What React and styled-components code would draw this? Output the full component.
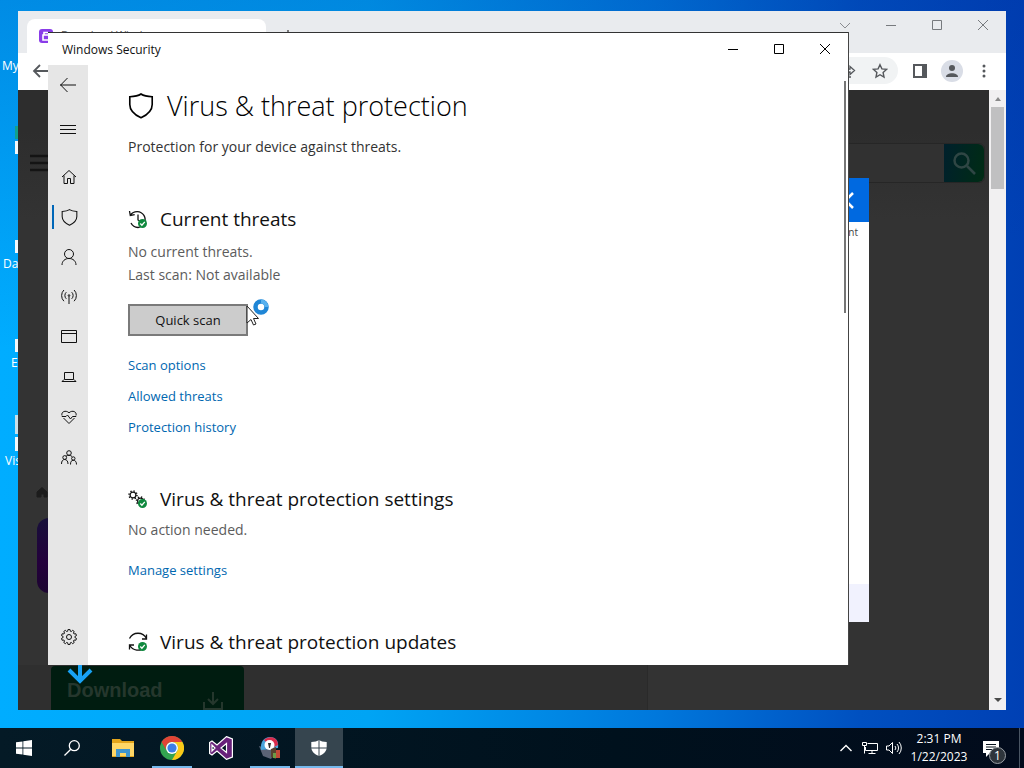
import React from "react";
import styled, { createGlobalStyle } from "styled-components";

const Global = createGlobalStyle`
  * { box-sizing: border-box; }
  html, body, #root { height: 100%; }
  body { margin: 0; overflow: hidden; font-family: "Open Sans", "Noto Sans", sans-serif; font-size: 14px; color: #111; }
  h1, h2, p, ul { margin: 0; padding: 0; font-weight: 400; }
  ul { list-style: none; }
  button { border: 0; padding: 0; background: none; font: inherit; color: inherit; }
  svg { display: block; flex: none; }
`;

/* ---------- desktop ---------- */
const Desktop = styled.div`
  display: flex;
  flex-direction: column;
  height: 100%;
  min-height: 600px;
  background: linear-gradient(174deg, rgba(0, 40, 150, 0.25) 0%, rgba(0, 60, 180, 0) 40%),
    linear-gradient(90deg, #00adff 0%, #00a4f4 36%, #0078dc 64%, #0050c0 84%, #0040b4 100%);
`;
const Workspace = styled.main`
  position: relative;
  flex: 1;
  overflow: hidden;
`;
const Shortcut = styled.div`
  position: absolute;
  top: ${(p) => p.$top}px;
  left: ${(p) => p.$left}px;
  font-size: 12px;
  line-height: 16px;
  color: #fff;
`;
const ShortcutArt = styled.div`
  position: absolute;
  top: ${(p) => p.$top}px;
  left: 15px;
  width: 32px;
  height: ${(p) => p.$height}px;
  background: ${(p) => p.$color || "#f4f8fa"};
`;

/* ---------- browser window ---------- */
const BrowserWindow = styled.section`
  position: absolute;
  inset: 11px 18px 18px;
  display: flex;
  flex-direction: column;
  background: #fff;
`;
const TabStrip = styled.header`
  display: flex;
  align-items: flex-end;
  height: 42px;
  padding-left: 9px;
  background: #e9ebee;
`;
const Tab = styled.div`
  display: flex;
  gap: 8px;
  width: 239px;
  height: 34px;
  padding: 10px 12px;
  border-radius: 8px 8px 0 0;
  background: #fff;
  font-size: 11px;
  line-height: 11px;
  color: #555;
`;
const NewTab = styled.button`
  width: 28px;
  height: 34px;
  margin-left: 8px;
  display: grid;
  place-items: center;
  color: #555;
`;
const Controls = styled.div`
  display: flex;
  align-self: flex-start;
  margin-left: auto;
`;
const ControlButton = styled.button`
  display: grid;
  place-items: center;
  width: 46px;
  height: ${(p) => p.$height}px;
  color: ${(p) => p.$color};
`;
const Toolbar = styled.div`
  display: flex;
  align-items: center;
  height: 37px;
  padding: 0 14px 2px 10px;
  color: #55585c;
`;
const AddressBar = styled.div`
  display: flex;
  flex: 1;
  align-items: center;
  justify-content: flex-end;
  gap: 15px;
  height: 27px;
  margin: 0 14px 0 64px;
  padding-right: 10px;
  border-radius: 14px;
  background: #f1f3f4;
`;
const Avatar = styled.button`
  display: grid;
  place-items: center;
  width: 22px;
  height: 22px;
  margin: 0 13px;
  border-radius: 50%;
  background: #d9dde6;
`;
const BrowserBody = styled.div`
  display: flex;
  flex: 1;
  min-height: 0;
`;
const WebPage = styled.div`
  position: relative;
  display: flex;
  flex: 1;
  flex-direction: column;
  overflow: hidden;
  background: linear-gradient(#2d2d2d 0, #2d2d2d 40px, #333 130px);
`;
const SiteHeader = styled.div`
  display: flex;
  align-items: center;
  justify-content: space-between;
  margin-top: 53px;
  padding: 0 4px 0 12px;
`;
const SiteSearch = styled.div`
  display: flex;
  justify-content: flex-end;
  width: 400px;
  height: 40px;
  border: 1px solid #262626;
  border-radius: 6px;
  background: #313131;
`;
const SiteSearchButton = styled.button`
  display: grid;
  place-items: center;
  width: 40px;
  border-radius: 0 6px 6px 0;
  background: linear-gradient(100deg, #00202c, #002c14);
  color: #2f4644;
`;
const AppBadge = styled.div`
  position: absolute;
  left: 19px;
  bottom: 117px;
  width: 75px;
  height: 75px;
  border-radius: 12px;
  background: linear-gradient(#17103a, #24003c 60%, #1c0530);
`;
const CrumbHome = styled.div`
  position: absolute;
  left: 18px;
  bottom: 212px;
  color: #1c1c1c;
`;
const LowerPanel = styled.div`
  display: flex;
  align-items: flex-end;
  width: 630px;
  height: 45px;
  margin-top: auto;
  padding-left: 33px;
  border-right: 1px solid #2a2a2a;
  background: #2f2f2f;
`;
const DownloadButton = styled.button`
  display: flex;
  align-items: flex-start;
  justify-content: space-between;
  width: 193px;
  height: 44px;
  padding: 10px 20px 0 16px;
  border-radius: 4px 4px 0 0;
  background: #001c10;
  font: 700 20px/28px "Liberation Sans", Arial, sans-serif;
  color: #25372d;
`;
const DownloadGlyph = styled.span`
  padding-top: 14px;
`;
const PromoArrow = styled.div`
  position: absolute;
  left: 48px;
  bottom: 26px;
`;
const Popup = styled.div`
  position: absolute;
  top: 88px;
  right: 120px;
  bottom: 88px;
  display: flex;
  flex-direction: column;
  width: 400px;
  background: #fff;
`;
const PopupHeader = styled.div`
  display: flex;
  align-items: center;
  justify-content: flex-end;
  height: 44px;
  padding-right: 15px;
  background: #0069e0;
  color: #fff;
`;
const PopupText = styled.p`
  flex: 1;
  padding: 1px 11px;
  font-size: 10px;
  line-height: 18px;
  text-align: right;
  color: #444;
`;
const PopupFooter = styled.div`
  height: 38px;
  background: #f1f2fe;
`;
const ScrollTrack = styled.div`
  display: flex;
  flex-direction: column;
  align-items: center;
  width: 17px;
  padding: 6px 0;
  background: #f1f0f1;
`;
const ScrollThumb = styled.div`
  width: 13px;
  height: 82px;
  margin: 5px 0 auto;
  background: #c0c0c1;
`;

/* ---------- security window ---------- */
const SecurityWindow = styled.section`
  position: absolute;
  inset: 32px 176px 63px 48px;
  display: flex;
  flex-direction: column;
  border-top: 1px solid #333;
  background: #fff;
  box-shadow: 1px 0 0 #444;
`;
const TitleBar = styled.header`
  display: flex;
  align-items: center;
  justify-content: space-between;
  height: 32px;
  padding: 2px 0 0 14px;
  font-size: 12px;
  line-height: 16px;
`;
const SecurityBody = styled.div`
  display: flex;
  flex: 1;
  min-height: 0;
`;
const SideNav = styled.nav`
  display: flex;
  flex-direction: column;
  width: 40px;
  padding-bottom: 8px;
  background: #e6e6e6;
`;
const NavButton = styled.button`
  position: relative;
  display: grid;
  flex: none;
  place-items: center;
  width: 40px;
  height: 40px;
  margin-top: ${(p) => p.$gap || "0"};
  padding-left: ${(p) => (p.$item ? "2px" : "0")};
  &::before {
    content: "";
    position: absolute;
    left: 4px;
    width: 2px;
    height: 24px;
    background: ${(p) => (p.$active ? "#0067b8" : "transparent")};
  }
`;
const Content = styled.div`
  flex: 1;
  padding: 17px 0 0 40px;
  overflow: hidden;
`;
const PageTitle = styled.h1`
  display: flex;
  align-items: center;
  gap: 13px;
  height: 48px;
  font-size: 27px;
  font-weight: 300;
  line-height: 48px;
  color: #000;
`;
const Lead = styled.p`
  margin-top: 5px;
  line-height: 24px;
  color: #333;
`;
const Section = styled.section`
  margin-top: ${(p) => p.$gap || "42px"};
`;
const SectionTitle = styled.h2`
  display: flex;
  align-items: center;
  gap: 12px;
  font-size: 19px;
  line-height: 28px;
`;
const Detail = styled.p`
  margin-top: ${(p) => p.$gap || "0"};
  line-height: 23px;
  color: #5c5c5c;
`;
const ScanRow = styled.div`
  position: relative;
  margin-top: 18px;
`;
const ScanButton = styled.button`
  display: block;
  width: 120px;
  height: 32px;
  border: 2px solid #7a7a7a;
  background: #cccccc;
  font-size: 13px;
`;
const Pointer = styled.div`
  position: absolute;
  left: 118px;
  top: -7px;
`;
const LinkList = styled.ul`
  margin-top: 14px;
  font-size: 13px;
  line-height: 31px;
`;
const TextLink = styled.a`
  color: #0067b0;
  text-decoration: none;
`;
const ThinScroll = styled.div`
  width: 2px;
  height: 232px;
  margin: 16px 2px 0 0;
  background: #767676;
`;

/* ---------- taskbar ---------- */
const Taskbar = styled.footer`
  display: flex;
  height: 40px;
  background: linear-gradient(90deg, #041a26, #00111d 60%, #020b1c);
  color: #fff;
`;
const Pinned = styled.div`
  display: flex;
  gap: 1px;
  margin-left: 3px;
`;
const TaskButton = styled.button`
  display: grid;
  place-items: center;
  position: relative;
  width: 48px;
  height: 40px;
  background: ${(p) => (p.$active ? "#36454f" : "transparent")};
  &::after {
    content: "";
    position: absolute;
    bottom: 0;
    left: ${(p) => (p.$active ? "0" : "4px")};
    right: ${(p) => (p.$active ? "0" : "4px")};
    height: 2px;
    background: ${(p) => (p.$open || p.$active ? "#76b9ed" : "transparent")};
  }
`;
const Tray = styled.div`
  display: flex;
  align-items: center;
  gap: 8px;
  margin-left: auto;
  border-right: 1px solid #4a5563;
  margin-right: 4px;
  padding-right: 18px;
`;
const Clock = styled.time`
  width: 58px;
  font-size: 12px;
  line-height: 18px;
  text-align: center;
  white-space: nowrap;
`;
const Notifications = styled.button`
  position: relative;
  display: grid;
  place-items: center;
  margin-left: 5px;
  width: 20px;
  height: 40px;
`;
const Count = styled.span`
  position: absolute;
  left: 8px;
  top: 19px;
  width: 17px;
  height: 17px;
  border: 1px solid #9a9fa4;
  border-radius: 50%;
  background: #2e353c;
  font-size: 12px;
  line-height: 15px;
  text-align: center;
`;

/* ---------- icons ---------- */
const Icon = ({ size = 16, box = 16, w = 1, children, ...rest }) => (
  <svg width={size} height={size} viewBox={`0 0 ${box} ${box}`} fill="none" stroke="currentColor" strokeWidth={w} aria-hidden="true" {...rest}>
    {children}
  </svg>
);
const Minimize = () => <Icon><path d="M3 8.5h10" /></Icon>;
const Maximize = () => <Icon><path d="M3.5 3.5h9v9h-9z" /></Icon>;
const Close = () => <Icon><path d="M3 3l10 10M13 3L3 13" /></Icon>;
const ChevronDown = () => <Icon><path d="M3 6l5 5 5-5" /></Icon>;
const ShieldIcon = ({ size, w = 1 }) => (
  <Icon size={size} w={w}><path d="M8 .6C6.4 1.700 4 2.200 1.100 2.300v4.700c0 3.600 2.600 6.200 6.900 8.200 4.300-2 6.900-4.600 6.900-8.200V2.300C12 2.200 9.600 1.700 8 .6z" /></Icon>
);
const Check = ({ x, y }) => (
  <g transform={`translate(${x} ${y})`}>
    <circle r="4.5" fill="#0f893e" stroke="none" />
    <path d="M-2.200 0l1.600 1.700L2.300-1.600" stroke="#fff" strokeWidth="1.3" />
  </g>
);
const GearOutline = ({ cx, cy, r, teeth = 8, hole }) => {
  const pts = [];
  for (let i = 0; i < teeth; i++) {
    const base = (i / teeth) * Math.PI * 2;
    const step = (Math.PI * 2) / teeth;
    [[0.14, 0.78], [0.3, 1], [0.7, 1], [0.86, 0.78]].forEach(([t, k]) => {
      const a = base + step * t;
      pts.push(`${(cx + Math.cos(a) * r * k).toFixed(2)},${(cy + Math.sin(a) * r * k).toFixed(2)}`);
    });
  }
  return (
    <>
      <polygon points={pts.join(" ")} />
      {hole && <circle cx={cx} cy={cy} r={hole} />}
    </>
  );
};
const SmallGear = ({ cx, cy }) => (
  <>
    <circle cx={cx} cy={cy} r="2.9" strokeWidth="1.2" />
    <circle cx={cx} cy={cy} r="4" strokeWidth="1.5" strokeDasharray="1.3 1.84" />
  </>
);

const navItems = [
  ["Home", <Icon><path d="M1 8l7-6.500L15 8M3 6.500v8h3.500V9.500h3v5H13v-8" /></Icon>],
  ["Virus & threat protection", <ShieldIcon size={17} />],
  ["Account protection", <Icon size={18} box={18}><circle cx="9" cy="6" r="4.500" /><path d="M2 17c0-4 3-6.500 7-6.500s7 2.500 7 6.500" /></Icon>],
  ["Firewall & network protection", <Icon><circle cx="8" cy="6.500" r=".8" /><path d="M8 7.300V15M5.300 9.800a4.500 4.500 0 010-6.600M10.700 9.800a4.500 4.500 0 000-6.600M2.900 12.200a8 8 0 010-11.200M13.100 12.200a8 8 0 000-11.200" /></Icon>],
  ["App & browser control", <Icon><path d="M.5 1.500h15v12H.5zM.5 4.500h15" /></Icon>],
  ["Device security", <Icon><path d="M3.500 3.500h9v7h-9zM3 10.500l-2 2h14l-2-2" /></Icon>],
  ["Device performance & health", <Icon><path d="M1 6.500C-.2 3 4.500.5 8 3.800c3.500-3.300 8.200-.8 7 2.700M2.500 9L8 14.500 13.500 9M.8 7.500H5L6.500 6l3 4 2-2.500h3.700" /></Icon>],
  ["Family options", <Icon><circle cx="8" cy="4" r="2.300" /><circle cx="3.700" cy="8.500" r="1.900" /><circle cx="12.300" cy="9.500" r="1.700" /><path d="M5.200 7C6.300 6 9.700 6 11 7.500M.5 15c0-3 1.300-4.500 3.200-4.500S7 12 7 15M9.500 15.500c0-3 1-4.200 2.800-4.200s3.200 1.200 3.200 4.200" /></Icon>],
];

const shortcuts = [
  { label: "My", top: 58, left: 2 },
  { label: "Da", top: 256, left: 3 },
  { label: "E", top: 355, left: 11 },
  { label: "Vis", top: 453, left: 5 },
];
const shortcutArt = [
  { top: 126, height: 13, color: "#12a08c" },
  { top: 141, height: 13 },
  { top: 240, height: 13 },
  { top: 339, height: 13 },
  { top: 415, height: 19, color: "#c9dfe8" },
  { top: 437, height: 14 },
];

function Browser() {
  return (
    <BrowserWindow aria-label="Browser">
      <TabStrip>
        <Tab>
          <Icon size={14} box={14} stroke="#fff" w={1.6}>
            <rect width="14" height="14" rx="3" fill="#8a3ce8" stroke="none" />
            <path d="M4 6h6v5H4zM5 6V3.500h4" />
          </Icon>
          Download Windows
        </Tab>
        <NewTab aria-label="New tab"><Icon size={12} box={12} w={1.5}><path d="M6 0v12M0 6h12" /></Icon></NewTab>
        <Controls>
          <ControlButton $height={28} $color="#8a8c90" aria-label="Search tabs"><ChevronDown /></ControlButton>
          <ControlButton $height={28} $color="#777a7e" aria-label="Minimize"><Minimize /></ControlButton>
          <ControlButton $height={28} $color="#777a7e" aria-label="Maximize"><Maximize /></ControlButton>
          <ControlButton $height={28} $color="#777a7e" aria-label="Close"><Close /></ControlButton>
        </Controls>
      </TabStrip>
      <Toolbar>
        <button aria-label="Back"><Icon size={24} box={24} w={1.8}><path d="M6 12h16M12 6l-6 6 6 6" /></Icon></button>
        <AddressBar>
          <Icon w={1.3}><path d="M9 3.500l4.500 4L9 11.500V9C6 9 4 10 2.500 12c.5-3.500 3-6 6.500-6zM2 14h8" /></Icon>
          <Icon w={1.4}><path d="M8 1.700l1.900 4.200 4.600.5-3.400 3.100.9 4.500L8 11.700 4 14l.9-4.500L1.500 6.400l4.600-.5z" /></Icon>
        </AddressBar>
        <button aria-label="Side panel"><Icon w={2}><path d="M2 2h12v12H2z" /><path d="M10 2h4v12h-4z" fill="currentColor" stroke="none" /></Icon></button>
        <Avatar aria-label="Profile">
          <Icon size={14} box={14} stroke="none" fill="currentColor"><circle cx="7" cy="4" r="3" /><path d="M1 13c0-5 12-5 12 0z" /></Icon>
        </Avatar>
        <button aria-label="Menu"><Icon fill="currentColor" stroke="none"><circle cx="8" cy="3" r="1.5" /><circle cx="8" cy="8" r="1.5" /><circle cx="8" cy="13" r="1.5" /></Icon></button>
      </Toolbar>
      <BrowserBody>
        <WebPage>
          <SiteHeader>
            <Icon size={18} box={18} w={2.5} color="#141414"><path d="M0 2h18M0 9h18M0 16h18" /></Icon>
            <SiteSearch>
              <SiteSearchButton aria-label="Search"><Icon size={24} box={24} w={2.5}><circle cx="9.500" cy="9.500" r="7" /><path d="M15 15l8 8" /></Icon></SiteSearchButton>
            </SiteSearch>
          </SiteHeader>
          <CrumbHome><Icon size={12} box={12} fill="currentColor"><path d="M1 6l5-4.500L11 6v5H8V8H5v3H1z" /></Icon></CrumbHome>
          <AppBadge />
          <LowerPanel>
            <DownloadButton>
              Download
              <DownloadGlyph><Icon size={22} box={22} w={2}><path d="M11 2v12M6 9l5 5 5-5M2 12v7h18v-7" /></Icon></DownloadGlyph>
            </DownloadButton>
          </LowerPanel>
          <PromoArrow><Icon size={28} box={28} w={4} color="#18a2f5"><path d="M14 2v22M3 14l11 11 11-11" /></Icon></PromoArrow>
          <Popup>
            <PopupHeader><Icon size={17} box={17} w={2.5}><path d="M1 1l15 15M16 1L1 16" /></Icon></PopupHeader>
            <PopupText>nt</PopupText>
            <PopupFooter />
          </Popup>
        </WebPage>
        <ScrollTrack>
          <Icon size={6} box={6} fill="#8a8a8a" stroke="none"><path d="M0 5l3-4 3 4z" /></Icon>
          <ScrollThumb />
          <Icon size={8} box={8} fill="#4a4a4a" stroke="none"><path d="M0 2h8L4 6z" /></Icon>
        </ScrollTrack>
      </BrowserBody>
    </BrowserWindow>
  );
}

function Security() {
  return (
    <SecurityWindow aria-label="Windows Security">
      <TitleBar>
        Windows Security
        <Controls>
          <ControlButton $height={28} $color="#000" aria-label="Minimize"><Minimize /></ControlButton>
          <ControlButton $height={28} $color="#000" aria-label="Maximize"><Maximize /></ControlButton>
          <ControlButton $height={28} $color="#000" aria-label="Close"><Close /></ControlButton>
        </Controls>
      </TitleBar>
      <SecurityBody>
        <SideNav>
          <NavButton aria-label="Back"><Icon><path d="M0 8h16M7.500 1L.7 8l6.800 7" /></Icon></NavButton>
          <NavButton aria-label="Menu" $gap="4px"><Icon><path d="M0 4.500h16M0 8.500h16M0 12.500h16" /></Icon></NavButton>
          {navItems.map(([label, icon], i) => (
            <NavButton key={label} aria-label={label} $item $active={i === 1} $gap={i === 0 ? "8px" : "0"}>{icon}</NavButton>
          ))}
          <NavButton aria-label="Settings" $item $gap="auto"><Icon><GearOutline cx={8} cy={8} r={7.6} teeth={10} hole={2.5} /></Icon></NavButton>
        </SideNav>
        <Content>
          <PageTitle><ShieldIcon size={26} />Virus &amp; threat protection</PageTitle>
          <Lead>Protection for your device against threats.</Lead>
          <Section $gap="46px">
            <SectionTitle>
              <Icon size={20} box={20} w={1.3}>
                <path d="M2.500 6a8 8 0 117.500 12.500A8 8 0 013 14M1.500 2l.8 4.500 4.400-.8M10 5.500V11l3 2" />
                <Check x={14.5} y={14.5} />
              </Icon>
              Current threats
            </SectionTitle>
            <Detail $gap="7px">No current threats.</Detail>
            <Detail>Last scan: Not available</Detail>
            <ScanRow>
              <ScanButton>Quick scan</ScanButton>
              <Pointer>
                <Icon size={30} box={30}>
                  <path d="M1 9v17l4-3.500 2.500 5.500 2.500-1-2.500-5.500h5z" fill="#fff" stroke="#222" />
                  <circle cx="15" cy="10" r="5.500" fill="#fff" stroke="#1f86d6" strokeWidth="4.500" />
                  <path d="M15 4.500a5.500 5.500 0 015.500 5.500" stroke="#58b1ee" strokeWidth="4" />
                </Icon>
              </Pointer>
            </ScanRow>
            <LinkList>
              <li><TextLink href="#scan-options">Scan options</TextLink></li>
              <li><TextLink href="#allowed-threats">Allowed threats</TextLink></li>
              <li><TextLink href="#protection-history">Protection history</TextLink></li>
            </LinkList>
          </Section>
          <Section>
            <SectionTitle>
              <Icon size={20} box={20}>
                <SmallGear cx={5} cy={6} />
                <SmallGear cx={12.5} cy={12} />
                <Check x={14.5} y={14.5} />
              </Icon>
              Virus &amp; threat protection settings
            </SectionTitle>
            <Detail $gap="5px">No action needed.</Detail>
            <LinkList><li><TextLink href="#manage-settings">Manage settings</TextLink></li></LinkList>
          </Section>
          <Section>
            <SectionTitle>
              <Icon size={20} box={20} w={1.3}>
                <path d="M1.500 6.500a9.500 9.500 0 0117 0M18.500 2.500v4.500H14M17 15a9.500 9.500 0 01-15.500-2M1.500 17.500V13H6" />
                <Check x={14.5} y={14.5} />
              </Icon>
              Virus &amp; threat protection updates
            </SectionTitle>
          </Section>
        </Content>
        <ThinScroll />
      </SecurityBody>
    </SecurityWindow>
  );
}

export default function App() {
  return (
    <Desktop>
      <Global />
      <Workspace>
        {shortcutArt.map((a) => <ShortcutArt key={a.top} $top={a.top} $height={a.height} $color={a.color} />)}
        {shortcuts.map((s) => <Shortcut key={s.label} $top={s.top} $left={s.left}>{s.label}</Shortcut>)}
        <Browser />
        <Security />
      </Workspace>
      <Taskbar>
        <TaskButton aria-label="Start">
          <Icon fill="#fff" stroke="none"><path d="M0 2.300l6.500-.9v6.200H0zM7.300 1.300L16 0v7.600H7.300zM0 8.400h6.500v6.200L0 13.700zM7.300 8.400H16V16l-8.700-1.200z" /></Icon>
        </TaskButton>
        <TaskButton aria-label="Search"><Icon w={1.3}><circle cx="10.300" cy="5.700" r="5" /><path d="M6.800 9.200L.5 15.500" /></Icon></TaskButton>
        <Pinned>
          <TaskButton aria-label="File Explorer">
            <Icon size={22} box={22} stroke="none">
              <path d="M0 2h8l2 2h12v16H0z" fill="#e3a51c" />
              <path d="M0 6h22v13H0z" fill="#ffd766" />
              <path d="M4 20v-8h14v8h-4v-4H8v4z" fill="#3f95cf" />
            </Icon>
          </TaskButton>
          <TaskButton $open aria-label="Chrome">
            <Icon size={24} box={24} stroke="none">
              <circle cx="12" cy="12" r="12" fill="#33a350" />
              <path d="M1.600 6A12 12 0 0122.400 6H12a6 6 0 00-5.200 9z" fill="#e04436" />
              <path d="M22.400 6A12 12 0 0112 24l5.200-9A6 6 0 0012 6z" fill="#fbc918" />
              <circle cx="12" cy="12" r="6" fill="#fff" />
              <circle cx="12" cy="12" r="4.600" fill="#3b7ee8" />
            </Icon>
          </TaskButton>
          <TaskButton aria-label="Visual Studio">
            <Icon size={24} box={24} stroke="none">
              <path d="M17.500.6L23.400 3v18l-5.900 2.400L8 15l-5 4-2.400-1.500v-11L3 5l5 4zM17.500 7.500L12 12l5.500 4.500zM3 9v6l3-3z" fill="#68217a" stroke="#fff" strokeWidth="1.2" fillRule="evenodd" />
            </Icon>
          </TaskButton>
          <TaskButton $open aria-label="Installer">
            <Icon size={24} box={24} stroke="none">
              <path d="M1 10l4 10 8 3 5-8z" fill="#5b6375" />
              <path d="M3 14C2 6 6 1 12 1s9 4 8 11z" fill="#4aa4dc" />
              <path d="M6 4c5-5 14-3 14 5l-6 3z" fill="#d92b4b" />
              <circle cx="11.500" cy="9" r="5" fill="#fff" />
              <path d="M10 7h3l-1 5h-1z" fill="#333" />
              <path d="M13 13l5-2v12l-5-2z" fill="#57412e" />
              <path d="M18 14h4v8h-4z" fill="#c04a38" />
              <path d="M15 17h3v5h-3z" fill="#6b9c46" />
            </Icon>
          </TaskButton>
          <TaskButton $active aria-label="Windows Security">
            <Icon stroke="none">
              <path d="M8 0C6.500 1.300 3.500 2 .3 2v5.300c0 4 3 7 7.700 8.700 4.700-1.700 7.700-4.700 7.700-8.700V2C12.500 2 9.500 1.300 8 0z" fill="#fff" />
              <path d="M8 0v16M0 8h16" stroke="#36454f" strokeWidth="1" />
            </Icon>
          </TaskButton>
        </Pinned>
        <Tray>
          <Icon w={1.4}><path d="M2.500 11L8 5.500l5.500 5.500" /></Icon>
          <Icon><path d="M5.500 3.500h10v7h-12V7M10 10.500v3M6.500 13.500h7M.5 2.500h4v3h-4zM2.500 5.500v8" /></Icon>
          <Icon><path d="M.5 6v4h2.500l3.500 3.500v-11L3 6zM9 6a3 3 0 010 4M11 4a6 6 0 010 8M13 2a9 9 0 010 12" /></Icon>
          <Clock>2:31 PM<br />1/22/2023</Clock>
          <Notifications aria-label="Notifications">
            <Icon size={18} box={18} stroke="none"><path d="M1 2h16v12H8l-4 4v-4H1z" fill="#fff" /><path d="M4 5.500h10M4 8h10M4 10.500h7" stroke="#06121d" /></Icon>
            <Count>1</Count>
          </Notifications>
        </Tray>
      </Taskbar>
    </Desktop>
  );
}
